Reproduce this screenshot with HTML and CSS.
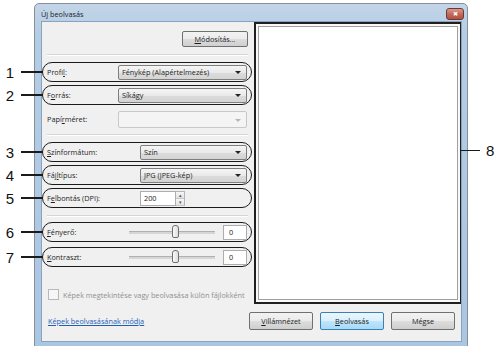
FILE: index.html
```html
<!DOCTYPE html>
<html lang="hu">
  <head>
    <meta charset="UTF-8" />
    <title>Új beolvasás</title>
    <link rel="stylesheet" href="styles.css">
  </head>
  <body>
    <div class="window">
      <div class="titlebar">
        <span class="title">Új beolvasás</span>
        <span class="close">&#x2716;</span>
      </div>
      <div class="client">
        <div class="main">
          <div class="settings">
            <div class="top-actions">
              <button class="btn"><u>M</u>ódosítás...</button>
            </div>
            <div class="sep"></div>

            <div class="row marked r1">
              <span class="mark"><b>1</b><i></i></span>
              <label class="lbl">Profi<u>l</u>:</label>
              <div class="combo">Fénykép (Alapértelmezés)</div>
            </div>
            <div class="row marked r2">
              <span class="mark"><b>2</b><i></i></span>
              <label class="lbl">F<u>o</u>rrás:</label>
              <div class="combo">Síkágy</div>
            </div>
            <div class="row r-paper">
              <label class="lbl">Papí<u>r</u>méret:</label>
              <div class="combo disabled"></div>
            </div>
            <div class="sep sep2"></div>

            <div class="row marked r3">
              <span class="mark"><b>3</b><i></i></span>
              <label class="lbl wide"><u>S</u>zínformátum:</label>
              <div class="combo">Szín</div>
            </div>
            <div class="row marked r4">
              <span class="mark"><b>4</b><i></i></span>
              <label class="lbl wide">Fáj<u>l</u>típus:</label>
              <div class="combo">JPG (JPEG-kép)</div>
            </div>
            <div class="row marked r5">
              <span class="mark"><b>5</b><i></i></span>
              <label class="lbl wide">F<u>e</u>lbontás (DPI):</label>
              <div class="spin">
                <span class="spin-val">200</span>
                <span class="spin-btns"><span>&#9652;</span><span>&#9662;</span></span>
              </div>
            </div>
            <div class="sep sep3"></div>

            <div class="row marked r6">
              <span class="mark"><b>6</b><i></i></span>
              <label class="lbl slim"><u>F</u>ényerő:</label>
              <div class="slider"><span class="thumb"></span></div>
              <div class="num-box">0</div>
            </div>
            <div class="row marked r7">
              <span class="mark"><b>7</b><i></i></span>
              <label class="lbl slim"><u>K</u>ontraszt:</label>
              <div class="slider"><span class="thumb"></span></div>
              <div class="num-box">0</div>
            </div>

            <div class="check">
              <span class="box"></span>
              <span>Képek megtekintése vagy beolvasása külön fájlokként</span>
            </div>
          </div>

          <div class="preview-mark">
            <div class="preview"></div>
            <span class="mark8"><i></i><b>8</b></span>
          </div>
        </div>

        <div class="footer">
          <a href="#" class="link">Képek beolvasásának módja</a>
          <div class="buttons">
            <button class="btn"><u>V</u>illámnézet</button>
            <button class="btn default"><u>B</u>eolvasás</button>
            <button class="btn">Mégse</button>
          </div>
        </div>
      </div>
    </div>
  </body>
</html>
```

FILE: styles.css
```css
body {
  margin: 0;
  background: #fff;
  font-family: "Open Sans", "Noto Sans", sans-serif;
  font-size: 7.3px;
  color: #1e1e1e;
}

u {
  text-decoration: underline;
}

.window {
  width: 421px;
  height: 338px;
  margin: 3px 0 0 34px;
  border: 1px solid #8a8f96;
  border-radius: 5px 5px 0 0;
  background: linear-gradient(#c3d5e8, #b4cde6 30px, #a9c6e3);
  display: flex;
  flex-direction: column;
  padding: 0 5px 5px 6px;
}

.titlebar {
  height: 17px;
  display: flex;
  align-items: center;
  justify-content: space-between;
}

.title {
  color: #1a1a1a;
  margin-top: 2px;
}

.close {
  width: 16px;
  height: 10px;
  margin-top: 2px;
  margin-right: -2px;
  border: 1px solid #6b3a35;
  border-radius: 3px;
  background: linear-gradient(#d99a8e, #c46a5b 50%, #b5503f);
  color: #fff;
  font-size: 6px;
  line-height: 10px;
  text-align: center;
}

.client {
  flex: 1;
  background: #f0f0f0;
  border: 1px solid #8aa2bb;
  display: flex;
  flex-direction: column;
}

.main {
  display: flex;
  height: 282px;
}

.settings {
  width: 211px;
  flex: none;
  padding-top: 9px;
}

.top-actions {
  display: flex;
  justify-content: flex-end;
  padding-right: 5px;
}

.btn {
  height: 16px;
  padding: 0;
  border: 1px solid #707070;
  border-radius: 2px;
  background: linear-gradient(#f2f2f2, #ebebeb 50%, #dddddd 51%, #cfcfcf);
  font-family: inherit;
  font-size: 7.3px;
  color: #1e1e1e;
}

.top-actions .btn {
  width: 66px;
}

.sep {
  height: 1px;
  margin: 7px 5px 0 5px;
  background: #d5d5d5;
  border-bottom: 1px solid #fff;
}

.row {
  position: relative;
  display: flex;
  align-items: center;
  width: 210px;
  height: 20px;
  box-sizing: border-box;
  border: 1.5px solid transparent;
  border-radius: 10px;
  padding: 0 4px 0 4px;
}

.marked {
  border-color: #1b1b1b;
}

.r1 { margin-top: 6px; }
.r2 { margin-top: 3px; }
.r-paper { margin-top: 4px; }
.sep2 { margin-top: 5px; }
.r3 { margin-top: 6px; }
.r4 { margin-top: 3px; }
.r5 { margin-top: 3px; }
.sep3 { margin-top: 7px; }
.r6 { margin-top: 5px; }
.r7 { margin-top: 5px; }

.mark {
  position: absolute;
  right: 100%;
  top: 50%;
  width: 41px;
  height: 16px;
  margin-top: -8px;
  display: flex;
  align-items: center;
}

.mark b,
.mark8 b {
  font-family: "Liberation Sans", Arial, sans-serif;
  font-weight: normal;
  font-size: 15px;
  color: #111;
  width: 16px;
  text-align: center;
}

.mark i,
.mark8 i {
  flex: 1;
  height: 1.5px;
  background: #1b1b1b;
  margin-left: 3px;
}

.lbl {
  width: 71px;
  flex: none;
}

.lbl.wide {
  width: 93px;
}

.lbl.slim {
  width: 82px;
}

.combo {
  flex: 1;
  height: 15px;
  box-sizing: border-box;
  border: 1px solid #7e7e7e;
  border-radius: 2px;
  background: linear-gradient(#f6f6f6, #e9e9e9 50%, #dcdcdc 51%, #d4d4d4);
  padding-left: 3px;
  line-height: 13px;
  position: relative;
}

.combo::after {
  content: "";
  position: absolute;
  right: 5px;
  top: 5px;
  border: 3px solid transparent;
  border-top: 3px solid #222;
  border-bottom: 0;
}

.combo.disabled {
  border-color: #c8c8c8;
  background: #f4f4f4;
  height: 17px;
}

.combo.disabled::after {
  border-top-color: #b5b5b5;
  top: 7px;
}

.spin {
  display: flex;
  height: 15px;
}

.spin-val {
  width: 36px;
  box-sizing: border-box;
  border: 1px solid #abadb3;
  background: #fff;
  padding-left: 3px;
  line-height: 13px;
}

.spin-btns {
  width: 9px;
  display: flex;
  flex-direction: column;
  border: 1px solid #b5b5b5;
  border-left: 0;
  box-sizing: border-box;
}

.spin-btns span {
  flex: 1;
  font-size: 5px;
  line-height: 6px;
  text-align: center;
  color: #555;
  background: linear-gradient(#f7f7f7, #e3e3e3);
  border-bottom: 1px solid #c8c8c8;
}

.slider {
  width: 86px;
  height: 2px;
  background: #d6d6d6;
  border-top: 1px solid #b0b0b0;
  position: relative;
}

.thumb {
  position: absolute;
  left: 43px;
  top: -7px;
  width: 5px;
  height: 11px;
  border: 1px solid #707070;
  border-radius: 3px 3px 2px 2px;
  background: linear-gradient(90deg, #fafafa, #dedede);
}

.num-box {
  margin-left: auto;
  width: 24px;
  height: 15px;
  box-sizing: border-box;
  border: 1px solid #abadb3;
  background: #fff;
  padding-left: 5px;
  line-height: 13px;
}

.check {
  display: flex;
  align-items: center;
  margin: 22px 0 0 6px;
  color: #8f8f8f;
}

.check .box {
  width: 9px;
  height: 9px;
  border: 1px solid #b8b8b8;
  background: #f6f6f6;
  margin-right: 4px;
}

.preview-mark {
  position: relative;
  flex: 1;
  margin-left: 1px;
  border: 2px solid #1f1f1f;
  border-right-width: 1.5px;
  padding: 2px;
  background: #f8f8f8;
}

.preview {
  height: 100%;
  box-sizing: border-box;
  border: 1px solid #a0a0a0;
  background: #fff;
}

.mark8 {
  position: absolute;
  left: 100%;
  top: 118px;
  width: 34px;
  display: flex;
  align-items: center;
}

.mark8 i {
  flex: none;
  width: 20px;
  margin: 0 6px 0 0;
}

.footer {
  flex: 1;
  display: flex;
  align-items: center;
  justify-content: space-between;
  padding: 0 6px 4px 6px;
}

.link {
  color: #1f5fb8;
  text-decoration: underline;
}

.buttons {
  display: flex;
  gap: 7px;
}

.buttons .btn {
  width: 64px;
  height: 18px;
}

.btn.default {
  border-color: #3c7fb1;
  background: linear-gradient(#eaf6fd, #d9f0fc 50%, #bee6fd 51%, #a7d9f5);
}
```
